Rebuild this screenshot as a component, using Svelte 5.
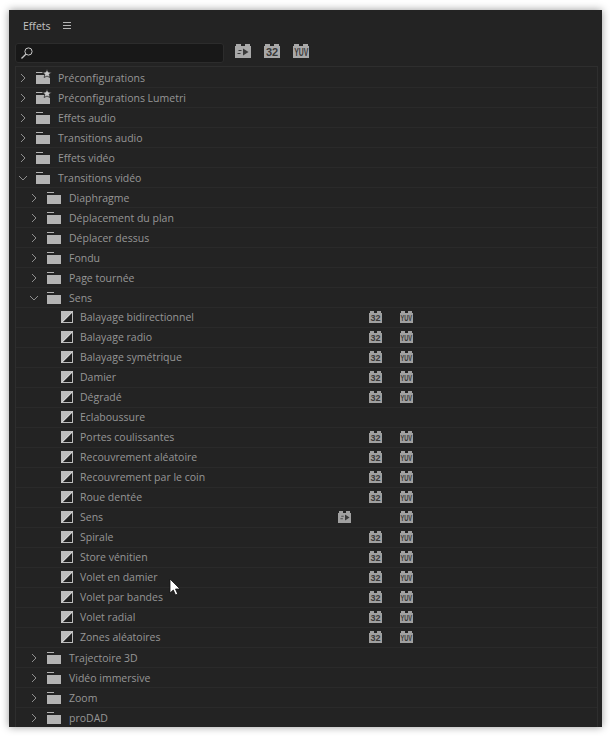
<script>
	const effects = [
		['Balayage bidirectionnel', 0, 1, 1],
		['Balayage radio', 0, 1, 1],
		['Balayage symétrique', 0, 1, 1],
		['Damier', 0, 1, 1],
		['Dégradé', 0, 1, 1],
		['Eclaboussure', 0, 0, 0],
		['Portes coulissantes', 0, 1, 1],
		['Recouvrement aléatoire', 0, 1, 1],
		['Recouvrement par le coin', 0, 1, 1],
		['Roue dentée', 0, 1, 1],
		['Sens', 1, 0, 1],
		['Spirale', 0, 1, 1],
		['Store vénitien', 0, 1, 1],
		['Volet en damier', 0, 1, 1],
		['Volet par bandes', 0, 1, 1],
		['Volet radial', 0, 1, 1],
		['Zones aléatoires', 0, 1, 1]
	];

	const rows = [
		{ name: 'Préconfigurations', level: 0, star: true },
		{ name: 'Préconfigurations Lumetri', level: 0, star: true },
		{ name: 'Effets audio', level: 0 },
		{ name: 'Transitions audio', level: 0 },
		{ name: 'Effets vidéo', level: 0 },
		{ name: 'Transitions vidéo', level: 0, open: true },
		{ name: 'Diaphragme', level: 1 },
		{ name: 'Déplacement du plan', level: 1 },
		{ name: 'Déplacer dessus', level: 1 },
		{ name: 'Fondu', level: 1 },
		{ name: 'Page tournée', level: 1 },
		{ name: 'Sens', level: 1, open: true },
		...effects.map(([name, accel, b32, yuv]) => ({ name, accel, b32, yuv, effect: true })),
		{ name: 'Trajectoire 3D', level: 1 },
		{ name: 'Vidéo immersive', level: 1 },
		{ name: 'Zoom', level: 1 },
		{ name: 'proDAD', level: 1 }
	];
</script>

{#snippet accelIcon()}
	<svg viewBox="0 0 12 8">
		<path d="M1.500 2.500h3M.5 5.500h3" stroke="#3a3a3a" fill="none" />
		<path d="M6 .5l5.500 3.500L6 7.500z" fill="#3a3a3a" />
	</svg>
{/snippet}

<div class="window">
	<div class="panel">
		<header class="tabs">
			<span class="tab">Effets</span>
			<svg class="menu" width="9" height="8" viewBox="0 0 9 8">
				<path d="M0 .5h8M0 3.500h8M0 6.500h8" stroke="#b4b4b4" fill="none" />
			</svg>
		</header>

		<div class="toolbar">
			<div class="search">
				<svg width="14" height="14" viewBox="0 0 14 14">
					<circle cx="8.500" cy="5.500" r="3.600" stroke="#c8c8c8" fill="none" />
					<path d="M5.800 8.200L1.500 12.500" stroke="#c8c8c8" stroke-width="1.300" fill="none" />
				</svg>
			</div>
			<div class="filters">
				<span class="badge">{@render accelIcon()}</span>
				<span class="badge"><span class="num">32</span></span>
				<span class="badge"><span class="yuv">YUV</span></span>
			</div>
		</div>

		<div class="tree">
			{#each rows as row}
				<div class="row" class:nested={row.level === 1} class:leaf={row.effect}>
					{#if row.effect}
						<svg class="swatch" width="12" height="12" viewBox="0 0 12 12">
							<rect width="12" height="12" fill="#bcbcbc" />
							<path d="M11 2v9H2z" fill="#1f1f1f" />
							<path d="M11.500 .5L.5 11.500" stroke="#d4d4d4" fill="none" />
						</svg>
					{:else}
						<svg class="chevron" width="10" height="10" viewBox="0 0 10 10">
							{#if row.open}
								<path d="M1 3l4 4 4-4" stroke="#8e8e8e" fill="none" />
							{:else}
								<path d="M3 1l4 4-4 4" stroke="#8e8e8e" fill="none" />
							{/if}
						</svg>
						<svg class="folder" width="15" height="12" viewBox="0 0 15 12">
							{#if row.star}
								<path d="M0 0h7v1H0zM0 3h14v9H0z" fill="#b3b3b3" />
								<path d="M11 -3l1.300 3 3.200.3-2.400 2.100.8 3.100L11 4 8.100 5.500l.8-3.100L6.500 .3 9.700 0z" fill="#c8c8c8" stroke="#232323" stroke-width=".8" />
							{:else}
								<path d="M0 0h7v1H0zM0 3h14v9H0z" fill="#b3b3b3" />
							{/if}
						</svg>
					{/if}
					<span class="name">{row.name}</span>
					{#if row.effect}
						<div class="flags">
							<div class="flag">{#if row.accel}<span class="badge small">{@render accelIcon()}</span>{/if}</div>
							<div class="flag">{#if row.b32}<span class="badge small"><span class="num">32</span></span>{/if}</div>
							<div class="flag">{#if row.yuv}<span class="badge small"><span class="yuv">YUV</span></span>{/if}</div>
						</div>
					{/if}
				</div>
			{/each}
		</div>
	</div>

	<svg class="cursor" width="13" height="19" viewBox="0 0 13 19">
		<path d="M1 1v14l3.300-3 2.200 5 2.200-1-2.200-5H11z" fill="#fff" stroke="#111" stroke-width=".8" />
	</svg>
</div>

<style>
	:global(body) {
		margin: 0;
		background: #fff;
	}

	.window {
		position: relative;
		width: 610px;
		height: 736px;
		padding: 10px 8px 9px 9px;
		box-sizing: border-box;
		overflow: hidden;
		font-family: 'Open Sans', sans-serif;
	}

	.panel {
		height: 100%;
		background: #232323;
		box-shadow: 0 0 8px rgba(0, 0, 0, 0.4);
		overflow: hidden;
		box-sizing: border-box;
		padding: 0 4px 0 6px;
	}

	.tabs {
		height: 29px;
		box-sizing: border-box;
		padding: 2px 0 0 8px;
		display: flex;
		align-items: center;
		gap: 12px;
	}

	.tab {
		font-size: 10.500px;
		color: #c4c4c4;
	}

	.toolbar {
		height: 27px;
		display: flex;
		align-items: center;
		gap: 11px;
	}

	.search {
		width: 203px;
		height: 18px;
		background: #181818;
		border: 1px solid #2c2c2c;
		border-radius: 3px;
		display: flex;
		align-items: center;
		padding-left: 4px;
	}

	.filters {
		display: flex;
		gap: 13px;
		margin-bottom: 3px;
	}

	.badge {
		position: relative;
		width: 16px;
		height: 12px;
		margin-top: 2px;
		background: #a8a8a8;
		display: flex;
		align-items: center;
		justify-content: center;
		color: #383838;
		font-family: 'Liberation Sans', sans-serif;
	}

	.badge::before,
	.badge::after {
		content: '';
		position: absolute;
		top: -2px;
		width: 5px;
		height: 2px;
		background: #a8a8a8;
	}

	.badge::before {
		left: 1px;
	}

	.badge::after {
		right: 1px;
	}

	.badge svg {
		width: 12px;
		height: 8px;
	}

	.badge.small {
		width: 13px;
		height: 10px;
		background: #a0a0a0;
	}

	.badge.small::before,
	.badge.small::after {
		background: #a0a0a0;
		width: 4px;
	}

	.badge.small svg {
		width: 10px;
		height: 7px;
	}

	.num {
		font-size: 11px;
		font-weight: 700;
	}

	.small .num {
		font-size: 9px;
	}

	.yuv {
		display: inline-block;
		font-size: 10px;
		font-weight: 700;
		transform: scaleX(0.68);
	}

	.small .yuv {
		font-size: 9px;
		transform: scaleX(0.62);
	}

	.tree {
		border: 1px solid #2e2e2e;
		border-bottom: 0;
		height: 662px;
		padding-top: 1px;
		overflow: hidden;
	}

	.row {
		height: 20px;
		box-sizing: border-box;
		border-bottom: 1px solid #2a2a2a;
		display: flex;
		align-items: center;
		padding-left: 2px;
		font-size: 10.500px;
		color: #969696;
	}

	.row.nested {
		padding-left: 13px;
	}

	.row.leaf {
		padding: 0 0 2px 45px;
	}

	.chevron {
		margin-right: 8px;
	}

	.folder {
		margin-right: 7px;
		overflow: visible;
	}

	.swatch {
		margin-right: 7px;
	}

	.name {
		white-space: nowrap;
		line-height: 18px;
		width: 249px;
	}

	.row:not(.leaf) .name {
		width: auto;
	}

	.flags {
		display: flex;
	}

	.flag {
		width: 31px;
		display: flex;
		justify-content: center;
	}

	.cursor {
		position: absolute;
		left: 169px;
		top: 578px;
	}
</style>
